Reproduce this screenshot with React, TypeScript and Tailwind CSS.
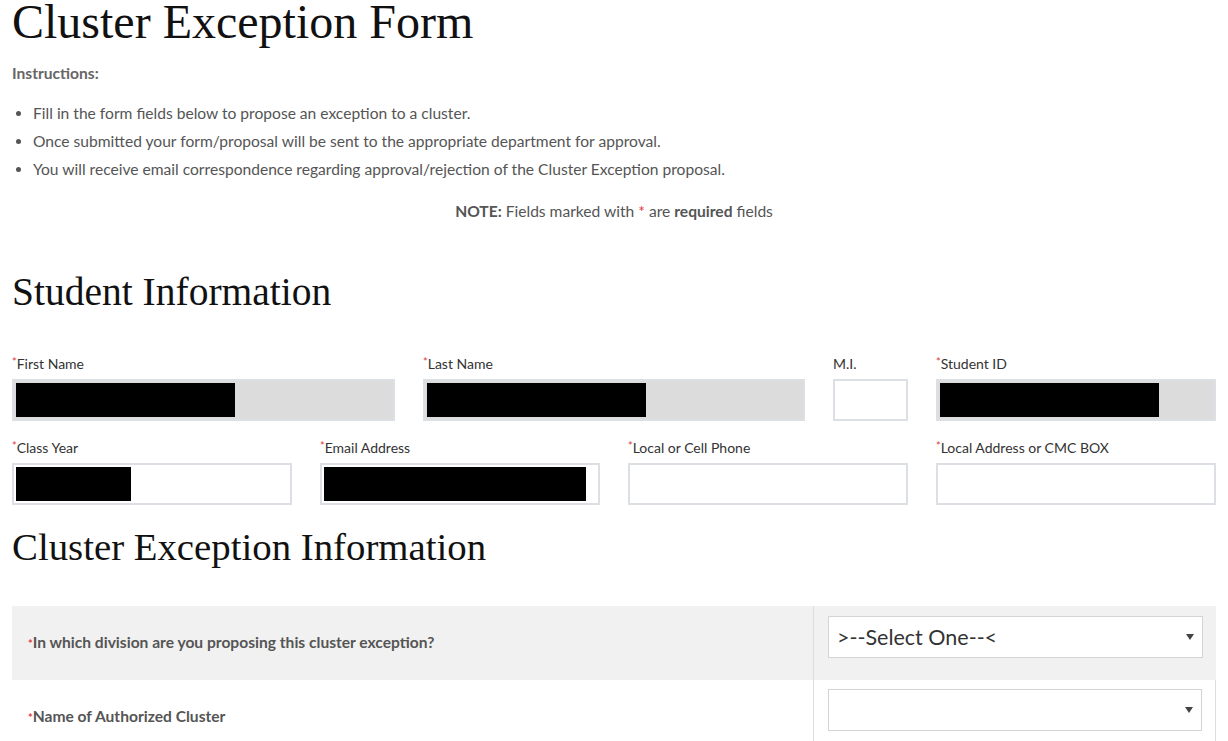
import { ReactNode } from "react";

const Req = () => <span className="text-[#e0393e] text-[11px] align-top leading-none">*</span>;

const Label = ({ children, req = true }: { children: ReactNode; req?: boolean }) => (
    <div className="text-[14px] leading-[16px] text-[#333] h-[16px] mb-[7px] whitespace-nowrap">
        {req && <Req />}
        {children}
    </div>
);

const Field = ({ label, req = true, readOnly = false, redact = 0 }: { label: string; req?: boolean; readOnly?: boolean; redact?: number }) => (
    <div>
        <Label req={req}>{label}</Label>
        <div className={`h-[42px] border-2 border-[#dcdfe4] p-[2px] ${readOnly ? "bg-[#dcdcdc] border-[#d0d3d6]" : "bg-white"}`}>
            {redact > 0 && <div className="h-[34px] bg-black" style={{ width: redact }} />}
        </div>
    </div>
);

const Caret = () => (
    <svg width="8" height="6" viewBox="0 0 8 6" className="shrink-0">
        <path d="M0 0h8L4 6z" fill="#444" />
    </svg>
);

const Select = ({ text }: { text?: string }) => (
    <div className="h-[42px] bg-white border border-[#d4d4d4] flex items-center pl-[8px] pr-[8px]">
        <span className="flex-1 text-[21.5px] text-[#333]">{text}</span>
        <Caret />
    </div>
);

const App = () => {
    return (
        <div className="min-h-screen w-full bg-white font-['Lato','Noto_Sans',sans-serif] px-3 overflow-hidden">
            <h1 className="font-['Liberation_Serif',serif] text-[48px] leading-[50px] text-[#111] mt-[-3px] whitespace-nowrap">
                Cluster Exception Form
            </h1>

            <p className="mt-[17px] text-[15.6px] font-bold text-[#666] leading-[18px]">Instructions:</p>

            <ul className="mt-[17px] list-disc pl-[21px] text-[15.6px] text-[#555] leading-[28px] marker:text-[#555]">
                <li>Fill in the form fields below to propose an exception to a cluster.</li>
                <li>Once submitted your form/proposal will be sent to the appropriate department for approval.</li>
                <li>You will receive email correspondence regarding approval/rejection of the Cluster Exception proposal.</li>
            </ul>

            <p className="mt-[19px] text-center text-[15.6px] text-[#555] leading-[18px]">
                <span className="font-bold">NOTE:</span> Fields marked with <span className="text-[#e0393e]">*</span> are{" "}
                <span className="font-bold">required</span> fields
            </p>

            <h2 className="mt-[50px] font-['Liberation_Serif',serif] text-[39.5px] leading-[44px] text-[#111] whitespace-nowrap">
                Student Information
            </h2>

            <div className="mt-[42px] grid grid-cols-[383px_382px_75px_280px] gap-x-7">
                <Field label="First Name" readOnly redact={219} />
                <Field label="Last Name" readOnly redact={219} />
                <Field label="M.I." req={false} />
                <Field label="Student ID" readOnly redact={219} />
            </div>

            <div className="mt-[19px] grid grid-cols-4 gap-x-7">
                <Field label="Class Year" redact={115} />
                <Field label="Email Address" redact={262} />
                <Field label="Local or Cell Phone" />
                <Field label="Local Address or CMC BOX" />
            </div>

            <h2 className="mt-[20px] font-['Liberation_Serif',serif] text-[38.8px] leading-[44px] text-[#111] whitespace-nowrap">
                Cluster Exception Information
            </h2>

            <div className="mt-[37px] w-[1204px]">
                <div className="flex bg-[#f1f1f1] h-[74px]">
                    <div className="w-[801px] flex items-center pl-[16px] text-[15.6px] font-bold text-[#555]">
                        <Req />
                        In which division are you proposing this cluster exception?
                    </div>
                    <div className="flex-1 border-l border-[#ddd] pl-[14px] pr-[13px] pt-[10px]">
                        <Select text=">--Select One--<" />
                    </div>
                </div>
                <div className="flex bg-white h-[74px]">
                    <div className="w-[801px] flex items-center pl-[16px] text-[15.6px] font-bold text-[#555]">
                        <Req />
                        Name of Authorized Cluster
                    </div>
                    <div className="flex-1 border-l border-r border-[#ddd] pl-[14px] pr-[13px] pt-[9px]">
                        <Select />
                    </div>
                </div>
            </div>
        </div>
    );
};

export default App;
